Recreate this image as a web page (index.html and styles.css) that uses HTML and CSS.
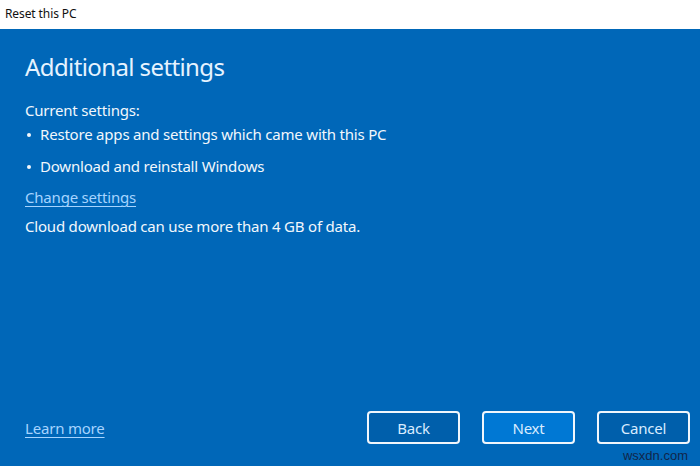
FILE: index.html
```html
<!DOCTYPE html>
<html>
<head>
<meta charset="utf-8">
<link rel="stylesheet" href="styles.css">
</head>
<body>
<div class="window">
  <div class="titlebar">Reset this PC</div>
  <div class="content">
    <div class="main">
      <h1 class="title">Additional settings</h1>
      <p class="label">Current settings:</p>
      <ul class="list">
        <li class="item item-first">Restore apps and settings which came with this PC</li>
        <li class="item item-second">Download and reinstall Windows</li>
      </ul>
      <a class="link change">Change settings</a>
      <p class="note">Cloud download can use more than 4 GB of data.</p>
    </div>
    <div class="footer">
      <a class="link learn">Learn more</a>
      <div class="buttons">
        <button class="btn">Back</button>
        <button class="btn btn-primary">Next</button>
        <button class="btn">Cancel</button>
      </div>
    </div>
    <div class="watermark">wsxdn.com</div>
  </div>
</div>
</body>
</html>
```
FILE: styles.css
```css
html, body {
  margin: 0;
  padding: 0;
  width: 700px;
  height: 466px;
  overflow: hidden;
}
body {
  font-family: "Noto Sans", "Open Sans", sans-serif;
}
.window {
  display: flex;
  flex-direction: column;
  width: 700px;
  height: 466px;
}
.titlebar {
  height: 29px;
  background: #ffffff;
  color: #111111;
  font-size: 12px;
  line-height: 27px;
  padding-left: 5px;
  box-sizing: border-box;
  letter-spacing: -0.1px;
}
.content {
  position: relative;
  flex: 1;
  background: #0067b8;
  display: flex;
  flex-direction: column;
  padding: 0 10px 22px 25px;
}
.main {
  flex: 1;
  color: #f2f7fc;
  font-size: 15px;
  letter-spacing: -0.2px;
}
.title {
  margin: 22px 0 0 0;
  font-size: 24px;
  font-weight: 400;
  line-height: 32px;
  color: #e6f3ff;
  letter-spacing: -0.6px;
}
.label {
  margin: 17px 0 0 0;
  line-height: 20px;
}
.list {
  list-style: none;
  margin: 4px 0 0 0;
  padding: 0;
}
.item {
  position: relative;
  padding-left: 15px;
  line-height: 20px;
}
.item::before {
  content: "";
  position: absolute;
  left: 2px;
  top: 9px;
  width: 4px;
  height: 4px;
  border-radius: 50%;
  background: #f2f7fc;
}
.item-second {
  margin-top: 12px;
}
.link {
  color: #a6d4ff;
  text-decoration: underline;
  text-underline-offset: 3px;
  text-decoration-thickness: 1px;
  font-size: 15px;
  line-height: 20px;
  letter-spacing: -0.2px;
}
.change {
  display: block;
  margin-top: 11px;
}
.note {
  margin: 9px 0 0 0;
  line-height: 20px;
}
.footer {
  display: flex;
  align-items: center;
  justify-content: space-between;
  height: 33px;
}
.buttons {
  display: flex;
  gap: 22px;
}
.btn {
  width: 93px;
  height: 33px;
  box-sizing: border-box;
  border: 2px solid #f0f6fc;
  border-radius: 4px;
  background: #005fab;
  color: #d9ecff;
  font-family: "Noto Sans", "Open Sans", sans-serif;
  font-size: 15px;
  letter-spacing: -0.2px;
  padding: 0;
}
.btn-primary {
  background: #0078d4;
}
.watermark {
  position: absolute;
  right: 12px;
  bottom: 3px;
  font-family: "Liberation Sans", Arial, sans-serif;
  font-size: 13px;
  color: #10264a;
}
```
